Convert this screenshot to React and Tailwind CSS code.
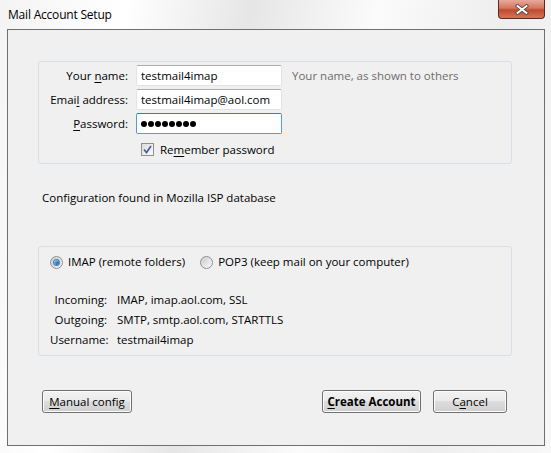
import React from "react";

const font = { fontFamily: '"Open Sans", "Noto Sans", sans-serif' };

function U({ children }) {
  return <span className="underline underline-offset-2">{children}</span>;
}

function TextBox({ children, focused }) {
  return (
    <div
      className={
        "h-[21px] w-[146px] rounded-[2px] border bg-white pl-[4px] flex items-center text-black " +
        (focused
          ? "border-[#5a9bd0] border-t-[#3d7bad]"
          : "border-[#e2e3ea] border-t-[#abadb3]")
      }
    >
      {children}
    </div>
  );
}

function Dots({ n }) {
  return (
    <div className="flex gap-[1px]">
      {Array.from({ length: n }).map((_, i) => (
        <div key={i} className="h-[6px] w-[6px] rounded-full bg-black" />
      ))}
    </div>
  );
}

function CheckBox() {
  return (
    <div className="h-[13px] w-[13px] border border-[#8e8f8f] bg-gradient-to-br from-[#dcdcdc] to-[#fbfbfb] flex items-center justify-center">
      <svg width="9" height="9" viewBox="0 0 9 9">
        <path d="M1 4.5 L3.5 7.5 L8 1" fill="none" stroke="#4a5f97" strokeWidth="1.7" />
      </svg>
    </div>
  );
}

function Radio({ on }) {
  return (
    <div className="h-[13px] w-[13px] rounded-full border border-[#8e8f8f] bg-gradient-to-br from-[#d0d0d0] to-[#fafafa] flex items-center justify-center">
      {on ? (
        <div className="h-[5px] w-[5px] rounded-full bg-gradient-to-br from-[#8ad1ff] to-[#0c4a8c] shadow-[0_0_1px_1px_#3b7ab5]" />
      ) : (
        <div className="h-[7px] w-[7px] rounded-full bg-gradient-to-br from-[#cfcfcf] to-[#f4f4f4]" />
      )}
    </div>
  );
}

function Button({ children, className = "", bold }) {
  return (
    <div
      className={
        "h-[23px] rounded-[3px] border border-[#707070] bg-[linear-gradient(#f2f2f2_0%,#ebebeb_45%,#dddddd_50%,#cfcfcf_100%)] shadow-[inset_0_0_0_1px_#fcfcfc] flex items-center justify-center text-black " +
        (bold ? "font-bold " : "") +
        className
      }
    >
      {children}
    </div>
  );
}

export default function App() {
  return (
    <div
      className="relative w-[551px] h-[453px] overflow-hidden bg-[linear-gradient(100deg,#f4f4f4_0%,#ffffff_20%,#e6e6e6_40%,#fbfbfb_60%,#eeeeee_80%,#f8f8f8_100%)] text-[11.5px] text-black"
      style={font}
    >
      {/* title bar */}
      <div className="h-[29px] flex items-start">
        <div className="pl-[8px] pt-[7px] leading-[16px] text-[12px] tracking-[-0.2px] text-black">Mail Account Setup</div>
      </div>
      <div className="absolute right-[6px] top-0 h-[19px] w-[47px] rounded-b-[4px] border border-t-0 border-[#5a2a25] bg-[linear-gradient(#e9a99b_0%,#d2775f_45%,#c04a2d_55%,#d4745a_100%)] flex items-center justify-center">
        <svg width="16" height="11" viewBox="0 0 16 11">
          <path d="M3.5 2 L12.5 9 M12.5 2 L3.5 9" stroke="#5b4a48" strokeWidth="3.6" strokeLinecap="square" />
          <path d="M3.5 2 L12.5 9 M12.5 2 L3.5 9" stroke="#ffffff" strokeWidth="1.8" strokeLinecap="square" />
        </svg>
      </div>

      {/* client area */}
      <div className="ml-[7px] w-[538px] h-[417px] border border-[#6f6f6f] bg-[#f0f0f0] flex flex-col">
        {/* identity group */}
        <div className="ml-[30px] mt-[31px] w-[474px] h-[103px] rounded-[3px] border border-[#d5dfe5] pt-[3px] flex flex-col">
          <div className="grid grid-cols-[89px_146px_auto] gap-x-[8px] gap-y-[3px] items-center">
            <div className="text-right">Your <U>n</U>ame:</div>
            <TextBox>testmail4imap</TextBox>
            <div className="pl-[2px] text-[#6d6d6d]">Your name, as shown to others</div>

            <div className="text-right">Emai<U>l</U> address:</div>
            <TextBox>testmail4imap@aol.com</TextBox>
            <div />

            <div className="text-right"><U>P</U>assword:</div>
            <TextBox focused>
              <Dots n={8} />
            </TextBox>
            <div />
          </div>
          <div className="ml-[102px] mt-[7px] flex items-center gap-[6px]">
            <CheckBox />
            <div>Re<U>m</U>ember password</div>
          </div>
        </div>

        <div className="ml-[34px] mt-[26px] leading-[16px]">Configuration found in Mozilla ISP database</div>

        {/* server group */}
        <div className="ml-[30px] mt-[40px] w-[474px] h-[110px] rounded-[3px] border border-[#d5dfe5] pl-[11px] pt-[7px] flex flex-col">
          <div className="flex items-center h-[16px]">
            <Radio on />
            <div className="ml-[5px]">IMAP (remote folders)</div>
            <div className="ml-[15px]"><Radio /></div>
            <div className="ml-[5px]">POP3 (keep mail on your computer)</div>
          </div>
          <div className="mt-[22px] grid grid-cols-[57px_auto] gap-x-[10px] gap-y-[4px] leading-[16px]">
            <div className="text-right">Incoming:</div>
            <div>IMAP, imap.aol.com, SSL</div>
            <div className="text-right">Outgoing:</div>
            <div>SMTP, smtp.aol.com, STARTTLS</div>
            <div className="text-right">Username:</div>
            <div>testmail4imap</div>
          </div>
        </div>

        {/* buttons */}
        <div className="mt-[34px] ml-[34px] mr-[37px] flex items-center">
          <Button className="w-[90px]"><span><U>M</U>anual config</span></Button>
          <div className="flex-1" />
          <Button bold className="w-[99px]"><span><U>C</U>reate Account</span></Button>
          <Button className="ml-[12px] w-[74px]"><span>C<U>a</U>ncel</span></Button>
        </div>
      </div>
    </div>
  );
}
